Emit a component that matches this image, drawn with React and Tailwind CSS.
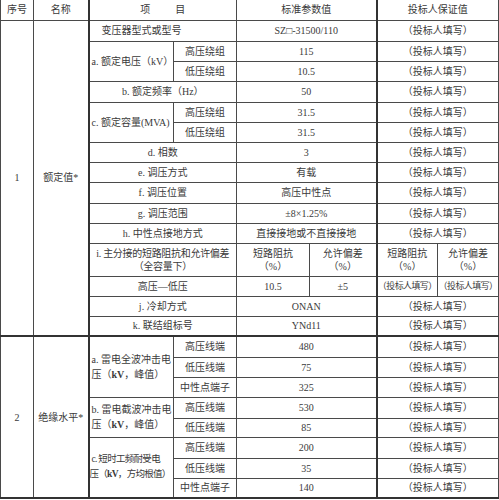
const FILL = '（投标人填写）'

const cell = 'border border-[#4a4a4a] p-0 text-center align-middle leading-[13px] whitespace-nowrap overflow-hidden'
const thick = 'border-l-2 border-l-[#333]'

function Row({ h, children }) {
  return <tr className={h}>{children}</tr>
}

function Val({ children, span = 2 }) {
  return <td colSpan={span} className={cell}>{children}</td>
}

function Fill() {
  return <td colSpan={2} className={`${cell} ${thick}`}>{FILL}</td>
}

export default function App() {
  return (
    <div
      className="w-[499px] h-[500px] bg-white overflow-hidden text-[10px] text-[#3a3a3a]"
      style={{ fontFamily: '"Liberation Serif", "Noto Sans CJK SC", serif' }}
    >
      <table className="table-fixed border-collapse w-[498px] border-b-2 border-b-[#333]">
        <colgroup>
          <col className="w-[33px]" />
          <col className="w-[55px]" />
          <col className="w-[85px]" />
          <col className="w-[63px]" />
          <col className="w-[73px]" />
          <col className="w-[67px]" />
          <col className="w-[61px]" />
          <col className="w-[61px]" />
        </colgroup>
        <tbody>
          {/* 表头 */}
          <Row h="h-[20px]">
            <td className={`${cell} border-t-0`}>序号</td>
            <td className={`${cell} border-t-0`}>名称</td>
            <td colSpan={2} className={`${cell} border-t-0 ${thick}`}>
              项<span className="inline-block w-[25px]" />目
            </td>
            <td colSpan={2} className={`${cell} border-t-0`}>标准参数值</td>
            <td colSpan={2} className={`${cell} border-t-0 ${thick}`}>投标人保证值</td>
          </Row>

          {/* 1 额定值 */}
          <Row h="h-[21px]">
            <td rowSpan={15} className={cell}>1</td>
            <td rowSpan={15} className={cell}>额定值*</td>
            <td colSpan={2} className={`${cell} text-left pl-[12px] ${thick}`}>变压器型式或型号</td>
            <Val>SZ□-31500/110</Val>
            <Fill />
          </Row>
          <Row h="h-[20px]">
            <td rowSpan={2} className={`${cell} text-left pl-[2px] ${thick}`}>a. 额定电压（kV）</td>
            <td className={cell}>高压绕组</td>
            <Val>115</Val>
            <Fill />
          </Row>
          <Row h="h-[20px]">
            <td className={cell}>低压绕组</td>
            <Val>10.5</Val>
            <Fill />
          </Row>
          <Row h="h-[21px]">
            <td colSpan={2} className={`${cell} ${thick}`}>b. 额定频率（Hz）</td>
            <Val>50</Val>
            <Fill />
          </Row>
          <Row h="h-[20px]">
            <td rowSpan={2} className={`${cell} text-left pl-[2px] ${thick}`}>c. 额定容量(MVA)</td>
            <td className={cell}>高压绕组</td>
            <Val>31.5</Val>
            <Fill />
          </Row>
          <Row h="h-[20px]">
            <td className={cell}>低压绕组</td>
            <Val>31.5</Val>
            <Fill />
          </Row>
          <Row h="h-[20px]">
            <td colSpan={2} className={`${cell} ${thick}`}>d. 相数</td>
            <Val>3</Val>
            <Fill />
          </Row>
          <Row h="h-[20px]">
            <td colSpan={2} className={`${cell} ${thick}`}>e. 调压方式</td>
            <Val>有载</Val>
            <Fill />
          </Row>
          <Row h="h-[21px]">
            <td colSpan={2} className={`${cell} ${thick}`}>f. 调压位置</td>
            <Val>高压中性点</Val>
            <Fill />
          </Row>
          <Row h="h-[20px]">
            <td colSpan={2} className={`${cell} ${thick}`}>g. 调压范围</td>
            <Val>±8×1.25%</Val>
            <Fill />
          </Row>
          <Row h="h-[20px]">
            <td colSpan={2} className={`${cell} ${thick}`}>h. 中性点接地方式</td>
            <Val>直接接地或不直接接地</Val>
            <Fill />
          </Row>
          <Row h="h-[33px]">
            <td colSpan={2} className={`${cell} ${thick} tracking-[-0.3px]`}>
              i. 主分接的短路阻抗和允许偏差<br />（全容量下）
            </td>
            <Val span={1}>短路阻抗<br />（%）</Val>
            <Val span={1}>允许偏差<br />（%）</Val>
            <td className={`${cell} ${thick}`}>短路阻抗<br />（%）</td>
            <Val span={1}>允许偏差<br />（%）</Val>
          </Row>
          <Row h="h-[20px]">
            <td colSpan={2} className={`${cell} ${thick}`}>高压—低压</td>
            <Val span={1}>10.5</Val>
            <Val span={1}>±5</Val>
            <td className={`${cell} ${thick} text-[9px] tracking-[-0.6px]`}>{FILL}</td>
            <td className={`${cell} text-[9px] tracking-[-0.6px]`}>{FILL}</td>
          </Row>
          <Row h="h-[20px]">
            <td colSpan={2} className={`${cell} ${thick}`}>j. 冷却方式</td>
            <Val>ONAN</Val>
            <Fill />
          </Row>
          <Row h="h-[20px]">
            <td colSpan={2} className={`${cell} ${thick}`}>k. 联结组标号</td>
            <Val>YNd11</Val>
            <Fill />
          </Row>

          {/* 2 绝缘水平 */}
          <tr className="h-[21px] border-t-2 border-t-[#333]">
            <td rowSpan={8} className={cell}>2</td>
            <td rowSpan={8} className={cell}>绝缘水平*</td>
            <td rowSpan={3} className={`${cell} text-left pl-[2px] ${thick} leading-[15px]`}>
              a. 雷电全波冲击电<br />压（<b>kV</b>，峰值）
            </td>
            <td className={cell}>高压线端</td>
            <Val>480</Val>
            <Fill />
          </tr>
          <Row h="h-[20px]">
            <td className={cell}>低压线端</td>
            <Val>75</Val>
            <Fill />
          </Row>
          <Row h="h-[20px]">
            <td className={cell}>中性点端子</td>
            <Val>325</Val>
            <Fill />
          </Row>
          <Row h="h-[21px]">
            <td rowSpan={2} className={`${cell} text-left pl-[2px] ${thick} leading-[15px]`}>
              b. 雷电截波冲击电<br />压（<b>kV</b>，峰值）
            </td>
            <td className={cell}>高压线端</td>
            <Val>530</Val>
            <Fill />
          </Row>
          <Row h="h-[19px]">
            <td className={cell}>低压线端</td>
            <Val>85</Val>
            <Fill />
          </Row>
          <Row h="h-[21px]">
            <td rowSpan={3} className={`${cell} text-left pl-0 ${thick} leading-[15px] text-[9.5px] tracking-[-0.7px]`}>
              <span className="pl-[2px]">c. 短时工频耐受电</span><br />压（<b>kV</b>，方均根值）
            </td>
            <td className={cell}>高压线端</td>
            <Val>200</Val>
            <Fill />
          </Row>
          <Row h="h-[20px]">
            <td className={cell}>低压线端</td>
            <Val>35</Val>
            <Fill />
          </Row>
          <Row h="h-[20px]">
            <td className={cell}>中性点端子</td>
            <Val>140</Val>
            <Fill />
          </Row>
        </tbody>
      </table>
    </div>
  )
}
